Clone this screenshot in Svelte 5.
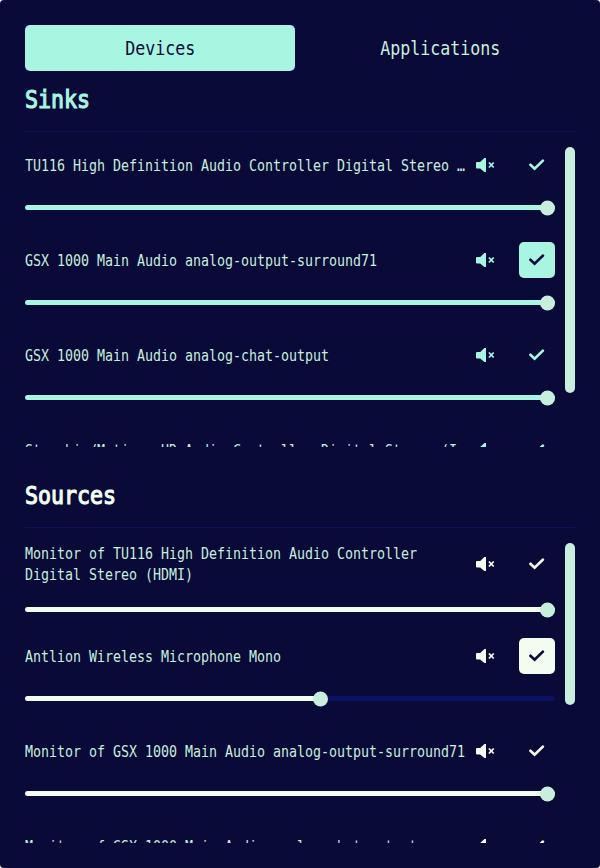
<script>
  let tab = $state('Devices');

  const panels = [
    {
      title: 'Sinks',
      tone: 'sinks',
      thumb: 246,
      devices: [
        { name: ['TU116 High Definition Audio Controller Digital Stereo …'], volume: 100 },
        { name: ['GSX 1000 Main Audio analog-output-surround71'], volume: 100, active: true },
        { name: ['GSX 1000 Main Audio analog-chat-output'], volume: 100 },
        { name: ['Starship/Matisse HD Audio Controller Digital Stereo (I…'], volume: 100 }
      ]
    },
    {
      title: 'Sources',
      tone: 'sources',
      thumb: 162,
      devices: [
        { name: ['Monitor of TU116 High Definition Audio Controller', 'Digital Stereo (HDMI)'], volume: 100 },
        { name: ['Antlion Wireless Microphone Mono'], volume: 56, active: true },
        { name: ['Monitor of GSX 1000 Main Audio analog-output-surround71'], volume: 100 },
        { name: ['Monitor of GSX 1000 Main Audio analog-chat-output'], volume: 100 }
      ]
    }
  ];
</script>

<main>
  <nav>
    {#each ['Devices', 'Applications'] as label}
      <button class="tab" class:selected={tab === label} onclick={() => (tab = label)}>
        <span class="narrow centered">{label}</span>
      </button>
    {/each}
  </nav>

  {#each panels as panel}
    <section class={panel.tone}>
      <h2><span class="narrow">{panel.title}</span></h2>
      <div class="body">
        <ul>
          {#each panel.devices as device}
            <li>
              <div class="info">
                <div class="name">
                  {#each device.name as line}
                    <span class="narrow">{line}</span>
                  {/each}
                </div>
                <button class="icon" aria-label="Mute">
                  <svg width="36" height="36" viewBox="0 0 36 36">
                    <path d="M10 15H13.2L17.4 11H19V25H17.4L13.2 21.4H10Q9 21.4 9 20.4V16Q9 15 10 15Z" fill="currentColor" />
                    <path d="M21.9 15.5L26.7 20.5M26.7 15.5L21.9 20.5" stroke="currentColor" stroke-width="1.8" fill="none" />
                  </svg>
                </button>
                <button class="icon" class:active={device.active} aria-label="Set as default">
                  <svg width="36" height="36" viewBox="0 0 36 36">
                    <path d="M11.4 17.8L15.6 21.7L23.9 13.6" stroke="currentColor" stroke-width="2.7" stroke-linecap="round" fill="none" />
                  </svg>
                </button>
              </div>
              <div class="slider">
                <div class="fill" style="width: {device.volume}%"></div>
                <div class="knob" style="left: calc((100% - 15px) * {device.volume / 100})"></div>
              </div>
            </li>
          {/each}
        </ul>
        <div class="scrollbar"><div style="height: {panel.thumb}px"></div></div>
      </div>
    </section>
  {/each}
</main>

<style>
  :global(body) {
    margin: 0;
    background: #fff;
  }
  main {
    --bg: #090a38;
    --mint: #a8f5e1;
    --text: #c8eedd;
    --ivory: #f0fdf0;
    box-sizing: border-box;
    width: 600px;
    height: 868px;
    padding: 25px;
    border-radius: 4px;
    overflow: hidden;
    background: var(--bg);
    color: var(--text);
    font: 16px/21px 'DejaVu Sans Mono', monospace;
  }
  button {
    border: 0;
    padding: 0;
    margin: 0;
    background: none;
    color: inherit;
    font: inherit;
  }
  .narrow {
    display: block;
    width: max-content;
    white-space: pre;
    transform: scaleX(0.8306);
    transform-origin: 0 50%;
  }
  .centered {
    transform-origin: 50% 50%;
  }
  nav {
    display: flex;
    gap: 10px;
  }
  .tab {
    flex: 1;
    display: flex;
    align-items: center;
    justify-content: center;
    height: 46px;
    border-radius: 5px;
    font-size: 20px;
  }
  .tab.selected {
    background: var(--mint);
    color: var(--bg);
  }
  .sinks {
    --tone: var(--mint);
  }
  .sources {
    --tone: var(--ivory);
    padding-top: 20px;
  }
  h2 {
    box-sizing: border-box;
    height: 61px;
    margin: 0 0 15px;
    padding-top: 13px;
    border-bottom: 1px solid #10115a;
    color: var(--tone);
    font-size: 24.5px;
    font-weight: 400;
    line-height: 32px;
    -webkit-text-stroke: 1.2px var(--tone);
  }
  h2 .narrow {
    transform: scaleX(0.881);
  }
  .body {
    display: flex;
    justify-content: space-between;
    height: 300px;
  }
  ul {
    width: 530px;
    margin: 0;
    padding: 0;
    list-style: none;
    overflow: hidden;
  }
  li {
    height: 95px;
  }
  .info {
    display: flex;
    align-items: center;
    gap: 10px;
    min-height: 36px;
  }
  .name {
    width: 438px;
    flex: none;
  }
  .icon {
    width: 36px;
    height: 36px;
    border-radius: 5px;
    color: var(--tone);
  }
  .icon:first-of-type {
    margin-left: -6px;
  }
  .icon:last-of-type {
    margin-left: auto;
  }
  .icon.active {
    background: var(--tone);
    color: var(--bg);
  }
  .icon svg {
    display: block;
  }
  .slider {
    position: relative;
    height: 5px;
    margin-top: 22px;
    border-radius: 3px;
    background: #0b1065;
  }
  .fill {
    height: 100%;
    border-radius: 3px;
    background: var(--tone);
  }
  .knob {
    position: absolute;
    top: -5px;
    width: 15px;
    height: 15px;
    border-radius: 50%;
    background: var(--text);
    transform: translateY(0.5px);
  }
  .scrollbar {
    width: 10px;
  }
  .scrollbar div {
    border-radius: 5px;
    background: var(--text);
  }
</style>
